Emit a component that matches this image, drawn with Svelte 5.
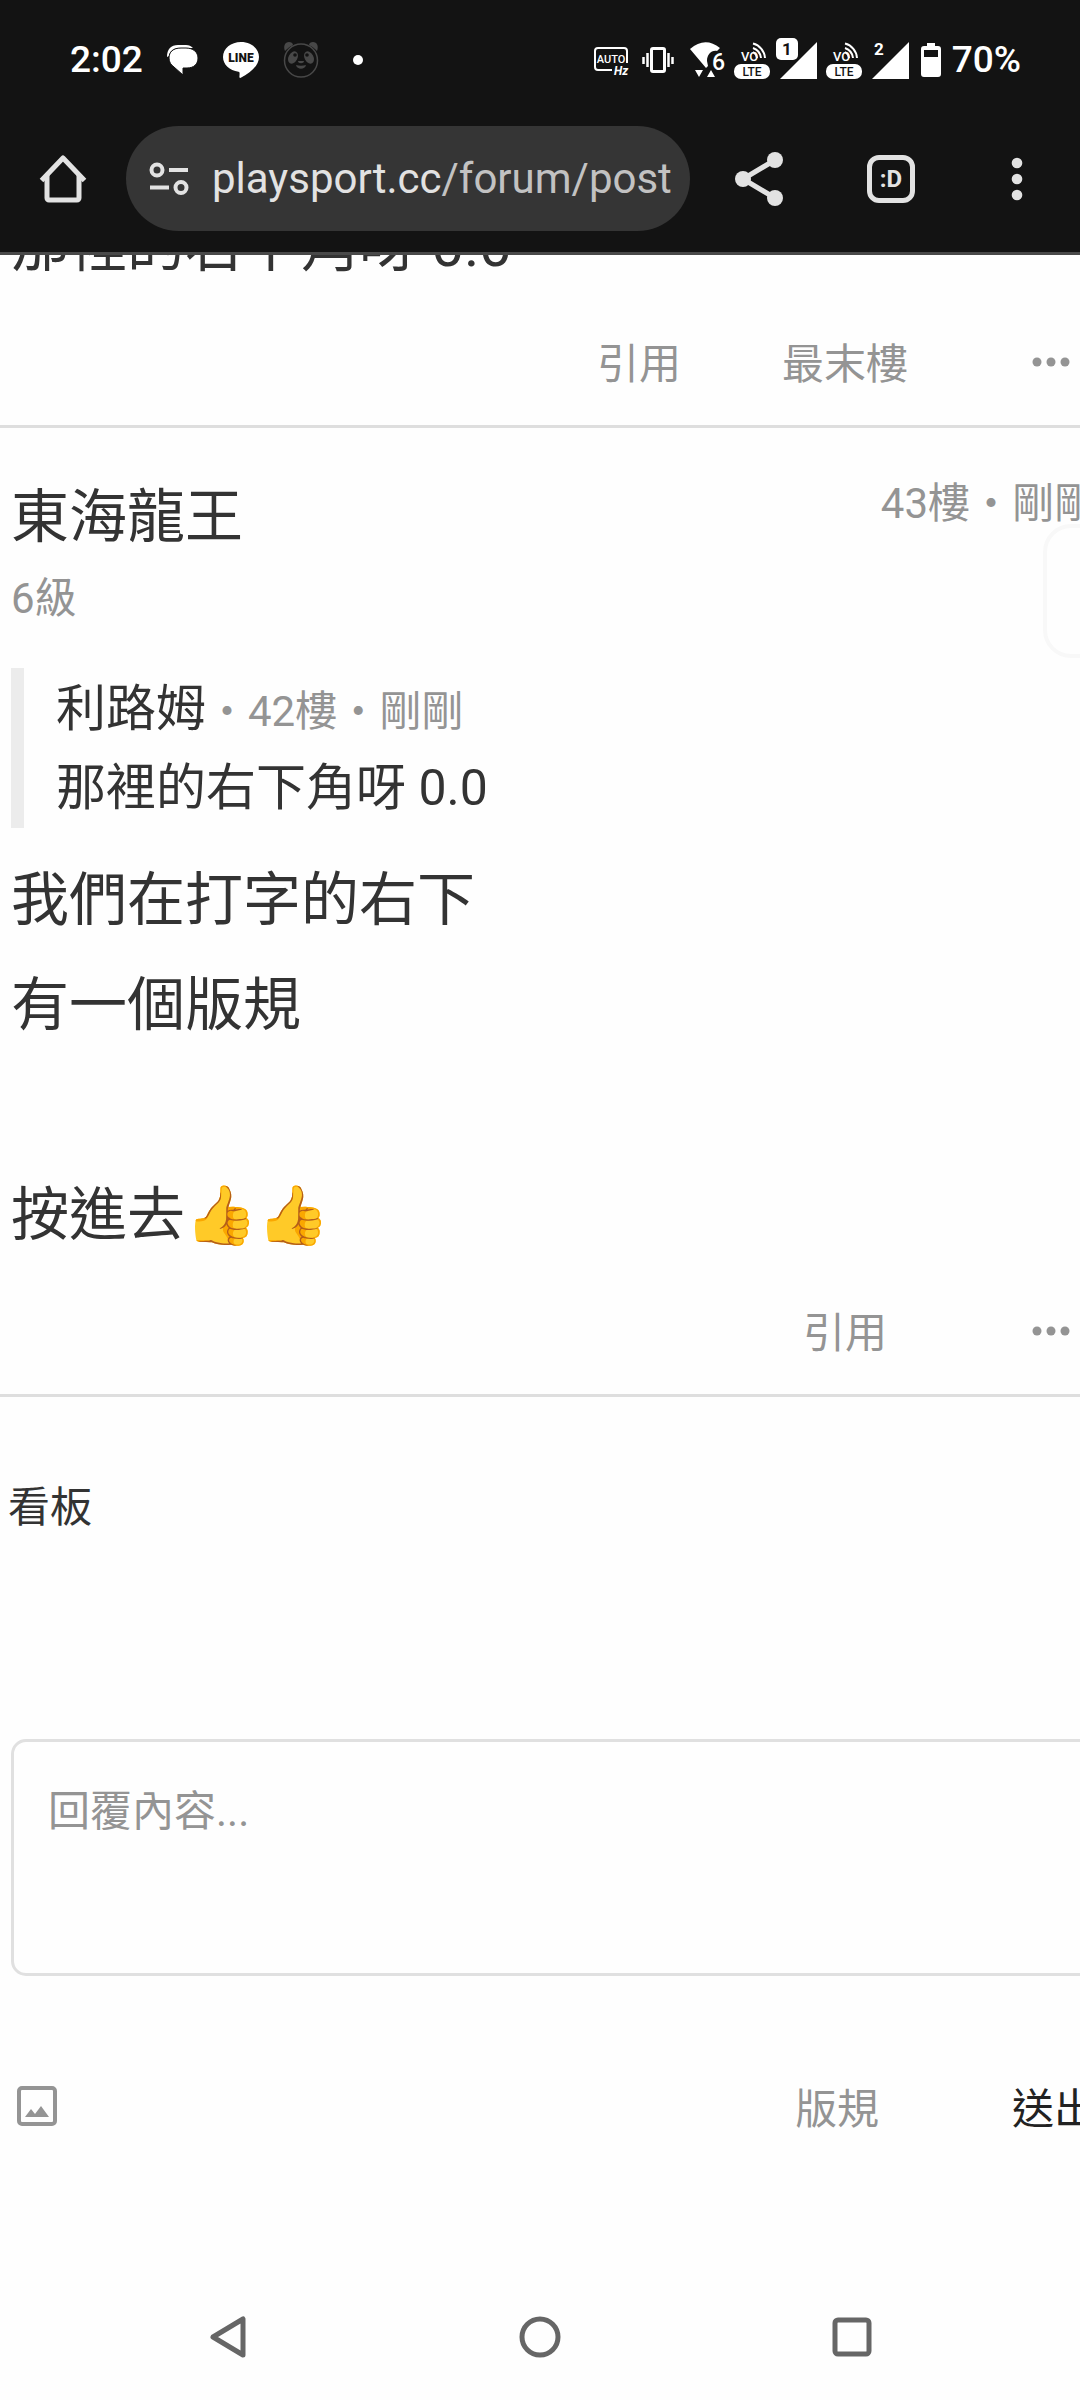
<script lang="ts">
	const previous = '那裡的右下角呀 0.0';

	const post = {
		author: '東海龍王',
		level: '6級',
		meta: '43樓・剛剛',
		quote: { author: '利路姆', meta: '・42樓・剛剛', text: '那裡的右下角呀 0.0' },
		lines: ['我們在打字的右下', '有一個版規', '', '按進去👍👍']
	};

	let reply = $state('');
</script>

{#snippet volte()}
	<svg width="36" height="40" viewBox="0 0 36 40" aria-hidden="true">
		<text class="vo" x="7" y="21">VO</text>
		<path
			d="M19 8a12 12 0 0 1 8 10M19 3.500a16 16 0 0 1 12 14.500M19 12a8 8 0 0 1 4 6"
			fill="none"
			stroke="#fff"
			stroke-width="2"
		/>
		<rect x="0" y="24" width="36" height="15" rx="7" fill="#fff" />
		<text class="lte" x="18" y="36" text-anchor="middle">LTE</text>
	</svg>
{/snippet}

{#snippet more()}
	<svg width="38" height="10" viewBox="0 0 38 10" fill="#949494" aria-hidden="true">
		<circle cx="5" cy="5" r="4.500" />
		<circle cx="19" cy="5" r="4.500" />
		<circle cx="33" cy="5" r="4.500" />
	</svg>
{/snippet}

<div class="screen">
	<header>
		<div class="status">
			<div class="notifications">
				<span class="time">2:02</span>
				<svg width="32" height="32" viewBox="0 0 32 32" aria-hidden="true">
					<path d="M0 13C0 5 4 1 11 1h8c3 0 5 1 7 3H13C6 4 3 7 2 12z" fill="#fff" />
					<path
						d="M14 4h5c7 0 12 4 12 10s-4 10-11 10h-4v7L7 23c-3-2-5-5-5-9C2 8 6 4 14 4z"
						fill="#fff"
						stroke="#131313"
						stroke-width="1"
					/>
				</svg>
				<svg width="36" height="36" viewBox="0 0 36 36" aria-hidden="true">
					<path
						d="M18 0C8 0 0 6.500 0 15c0 7.500 6.500 13.500 15.500 14.700 1.300.3 1.200 1 .9 5.200 0 1 .8 1.300 1.800.7C26 31 36 24.500 36 15 36 6.500 28 0 18 0z"
						fill="#fff"
					/>
					<text class="line" x="18" y="20" text-anchor="middle">LINE</text>
				</svg>
				<svg width="36" height="36" viewBox="0 0 36 36" fill="#484848" aria-hidden="true">
					<circle cx="18" cy="18.500" r="16.500" fill="none" stroke="#484848" stroke-width="1.500" />
					<path d="M2 9C0 4 2 0 6 0c2 0 4 1 4 3-4 2-6 4-8 6zM34 9c2-5 0-9-4-9-2 0-4 1-4 3 4 2 6 4 8 6z" />
					<ellipse cx="10" cy="15.500" rx="4.500" ry="6.500" transform="rotate(28 10 15.500)" />
					<ellipse cx="26" cy="15.500" rx="4.500" ry="6.500" transform="rotate(-28 26 15.500)" />
					<circle cx="12" cy="13" r="1.800" fill="#131313" />
					<circle cx="24" cy="13" r="1.800" fill="#131313" />
					<path d="M15 19h6c0 3-6 3-6 0zM13 23c3 1 7 1 10 0-1 5-9 5-10 0z" />
				</svg>
				<span class="dot"></span>
			</div>
			<div class="system">
				<svg class="spill" width="38" height="34" viewBox="0 0 38 34" aria-hidden="true">
					<path
						d="M33 20V8a3 3 0 0 0-3-3H4a3 3 0 0 0-3 3v16a3 3 0 0 0 3 3h14"
						fill="none"
						stroke="#fff"
						stroke-width="2"
					/>
					<text class="auto" x="17" y="20" text-anchor="middle">AUTO</text>
					<text class="hz" x="20" y="32">Hz</text>
				</svg>
				<svg width="36" height="26" viewBox="0 0 36 26" aria-hidden="true">
					<rect x="11.500" y="1.500" width="13" height="23" rx="1.500" fill="none" stroke="#fff" stroke-width="3" />
					<path d="M3.500 10v7M7.500 6v14M28.500 6v14M32.500 10v7" stroke="#fff" stroke-width="2.500" />
				</svg>
				<svg width="42" height="36" viewBox="0 0 42 36" fill="#fff" aria-hidden="true">
					<path d="M6 7Q21-6 36 6l-3 3c-6-1-10 4-10 10l1 5-2 2z" />
					<path d="M11 28h8l-4 7zM23 35h8l-4-7z" />
					<text class="six" x="28" y="28">6</text>
				</svg>
				{@render volte()}
				<svg class="spill" width="40" height="42" viewBox="0 0 40 42" aria-hidden="true">
					<path d="M2 40 39 3v37z" fill="#fff" />
					<rect x="-3" y="-2" width="24" height="24" rx="6" fill="#131313" />
					<rect x="-2" y="-1" width="22" height="22" rx="5" fill="#fff" />
					<text class="sim" x="9" y="16" text-anchor="middle" fill="#131313">1</text>
				</svg>
				{@render volte()}
				<svg class="spill" width="40" height="42" viewBox="0 0 40 42" fill="#fff" aria-hidden="true">
					<path d="M2 40 39 3v37z" />
					<text class="sim" x="9" y="16" text-anchor="middle">2</text>
				</svg>
				<svg width="26" height="34" viewBox="0 0 26 34" aria-hidden="true">
					<path
						d="M9 0h8v3h3a3 3 0 0 1 3 3v25a3 3 0 0 1-3 3H6a3 3 0 0 1-3-3V6a3 3 0 0 1 3-3h3zM6 7v7h14V7z"
						fill="#fff"
						fill-rule="evenodd"
					/>
				</svg>
				<span class="battery">70%</span>
			</div>
		</div>
		<div class="toolbar">
			<button class="home" aria-label="Home">
				<svg width="48" height="48" viewBox="0 0 48 48" fill="none" stroke="#e2e2e2" stroke-width="5">
					<path d="M2.500 25.500 24 3l21.500 22.500" stroke-linejoin="round" />
					<path d="M8 20v23a2 2 0 0 0 2 2h28a2 2 0 0 0 2-2V20" />
				</svg>
			</button>
			<button class="address">
				<svg width="40" height="34" viewBox="0 0 40 34" fill="none" stroke="#e2e2e2" stroke-width="4">
					<circle cx="8" cy="8" r="5.500" />
					<path d="M20 8h19M1 25.500h19" />
					<circle cx="32" cy="25.500" r="5.500" />
				</svg>
				<span class="url">playsport.cc<span>/forum/post</span></span>
			</button>
			<button aria-label="Share">
				<svg width="48" height="54" viewBox="0 0 48 54" fill="#e2e2e2">
					<path d="M40 8 8 27l32 19" fill="none" stroke="#e2e2e2" stroke-width="5" />
					<circle cx="40" cy="8" r="8" />
					<circle cx="8" cy="27" r="8" />
					<circle cx="40" cy="46" r="8" />
				</svg>
			</button>
			<button class="tabs" aria-label="Tabs">:D</button>
			<button class="menu" aria-label="Menu">
				<svg width="12" height="44" viewBox="0 0 12 44" fill="#e2e2e2">
					<circle cx="6" cy="6" r="5.300" />
					<circle cx="6" cy="22" r="5.300" />
					<circle cx="6" cy="38" r="5.300" />
				</svg>
			</button>
		</div>
	</header>

	<main>
		<div class="page">
			<article class="scrolled">
				<p class="body">{previous}</p>
				<div class="actions">
					<button>引用</button>
					<button>最末樓</button>
					<button class="more" aria-label="更多">{@render more()}</button>
				</div>
			</article>

			<article class="post">
				<div class="head">
					<h2>{post.author}</h2>
					<span class="meta">{post.meta}</span>
				</div>
				<p class="level">{post.level}</p>
				<blockquote>
					<p>{post.quote.author}<span class="meta">{post.quote.meta}</span></p>
					<p>{post.quote.text}</p>
				</blockquote>
				{#each post.lines as line}
					<p class="body">{line}</p>
				{/each}
				<div class="actions">
					<button>引用</button>
					<button class="more" aria-label="更多">{@render more()}</button>
				</div>
				<div class="side-tab"></div>
			</article>

			<a class="board" href="#board">看板</a>

			<form onsubmit={(e) => e.preventDefault()}>
				<textarea aria-label="回覆內容" placeholder="回覆內容..." bind:value={reply}></textarea>
				<div class="tools">
					<button type="button" class="picture" aria-label="圖片">
						<svg width="40" height="40" viewBox="0 0 40 40">
							<rect x="2" y="2" width="36" height="36" rx="3" fill="none" stroke="#949494" stroke-width="4" />
							<path d="m8 31 6-8 4 5 6-8 8 11z" fill="#949494" />
						</svg>
					</button>
					<a href="#rules">版規</a>
					<button class="send">送出</button>
				</div>
			</form>
		</div>
	</main>

	<nav>
		<button aria-label="Back">
			<svg width="44" height="44" viewBox="0 0 44 44">
				<path d="M37 4v36L7 22z" />
			</svg>
		</button>
		<button aria-label="Home screen">
			<svg width="44" height="44" viewBox="0 0 44 44">
				<circle cx="22" cy="22" r="18" />
			</svg>
		</button>
		<button aria-label="Recent apps">
			<svg width="44" height="44" viewBox="0 0 44 44">
				<rect x="5" y="5" width="34" height="34" rx="3" />
			</svg>
		</button>
	</nav>
</div>

<style>
	:global(body) {
		margin: 0;
		background: #fefefe;
	}

	.screen {
		display: flex;
		flex-direction: column;
		min-height: 100vh;
		overflow: hidden;
		color: #333;
		font-family: Roboto, 'Noto Sans CJK TC', sans-serif;
		font-size: 42px;
		line-height: 60px;
	}

	button {
		display: flex;
		align-items: center;
		justify-content: center;
		padding: 0;
		border: 0;
		background: none;
		color: inherit;
		font: inherit;
	}

	a {
		color: inherit;
		text-decoration: none;
	}

	h2,
	p,
	blockquote {
		margin: 0;
		font-weight: 400;
	}

	svg {
		display: block;
		flex: none;
	}

	header {
		background: #131313;
		border-bottom: 3px solid #494949;
		color: #fff;
	}

	.status {
		display: flex;
		align-items: center;
		justify-content: space-between;
		height: 120px;
		padding: 0 59px 0 70px;
		font-size: 37px;
		font-weight: 500;
	}

	.notifications,
	.system {
		display: flex;
		align-items: center;
	}

	.notifications {
		gap: 24px;
	}

	.system {
		gap: 8px;
	}

	.dot {
		width: 10px;
		height: 10px;
		margin-left: 10px;
		border-radius: 50%;
		background: #fff;
	}

	.spill {
		overflow: visible;
	}

	.vo {
		fill: #fff;
		font-size: 13px;
		font-weight: 500;
	}

	.lte {
		fill: #131313;
		font-size: 12px;
		font-weight: 500;
	}

	.line {
		fill: #131313;
		font-size: 12px;
		font-weight: 900;
	}

	.auto {
		fill: #fff;
		font-size: 11px;
		font-weight: 500;
	}

	.hz {
		fill: #fff;
		font-size: 12px;
		font-style: italic;
		font-weight: 700;
	}

	.six {
		fill: #fff;
		font-size: 23px;
		font-weight: 500;
	}

	.sim {
		font-size: 17px;
		font-weight: 700;
	}

	.toolbar {
		display: flex;
		align-items: center;
		padding: 6px 57px 21px 39px;
		color: #e2e2e2;
	}

	.home {
		margin-right: 39px;
	}

	.address {
		flex: 1;
		justify-content: flex-start;
		gap: 23px;
		min-width: 0;
		height: 105px;
		margin-right: 45px;
		padding: 0 12px 0 23px;
		border-radius: 53px;
		background: #353535;
		white-space: nowrap;
	}

	.url {
		overflow: hidden;
	}

	.url span {
		color: #c2c2c2;
	}

	.tabs {
		box-sizing: border-box;
		width: 48px;
		height: 48px;
		margin: 0 96px 0 84px;
		border: 5px solid #e2e2e2;
		border-radius: 12px;
		font-size: 24px;
		font-weight: 700;
	}

	main {
		flex: 1;
		overflow: hidden;
	}

	/* desktop layout, a little wider than the phone */
	.page {
		position: relative;
		width: calc(100% + 16px);
	}

	article {
		padding-left: 11px;
		border-bottom: 3px solid #dedede;
	}

	.scrolled {
		margin-top: -61px;
	}

	.body {
		min-height: 105px;
		font-size: 58px;
		line-height: 105px;
	}

	.actions {
		display: flex;
		justify-content: flex-end;
		height: 126px;
		margin-right: -58px;
		color: #949494;
	}

	.actions button {
		width: 206px;
		padding-top: 6px;
	}

	.actions .more {
		padding-top: 0;
	}

	.post {
		position: relative;
		padding-top: 54px;
	}

	.head {
		display: flex;
		align-items: flex-start;
		justify-content: space-between;
	}

	h2 {
		font-size: 58px;
		line-height: 70px;
	}

	.meta {
		color: #949494;
		font-size: 42px;
		line-height: 44px;
	}

	.level {
		margin-top: 17px;
		color: #949494;
	}

	blockquote {
		margin: 39px 0 20px;
		padding: 2px 0 0 32px;
		border-left: 13px solid #ececec;
		font-size: 50px;
		line-height: 79px;
	}

	.side-tab {
		position: absolute;
		top: 96px;
		right: -40px;
		box-sizing: border-box;
		width: 93px;
		height: 134px;
		border: 4px solid #f8f8f8;
		border-radius: 28px;
	}

	.board {
		display: block;
		width: fit-content;
		margin: 81px 0 0 8px;
	}

	form {
		margin: 201px 0 0 11px;
	}

	textarea {
		display: block;
		box-sizing: border-box;
		width: 100%;
		height: 237px;
		padding: 40px 34px;
		border: 3px solid #e0e0e0;
		border-radius: 15px;
		background: none;
		color: inherit;
		font: inherit;
		resize: none;
	}

	textarea::placeholder {
		color: #949494;
		opacity: 1;
	}

	.tools {
		display: flex;
		align-items: flex-end;
		margin-top: 104px;
		color: #949494;
	}

	.picture {
		margin: 0 auto 14px 6px;
	}

	.send {
		margin-left: 133px;
		color: #222;
	}

	nav {
		display: flex;
		height: 126px;
		padding: 0 72px;
	}

	nav button {
		flex: 1;
	}

	nav svg {
		fill: none;
		stroke: #666;
		stroke-width: 5;
		stroke-linejoin: round;
	}
</style>
